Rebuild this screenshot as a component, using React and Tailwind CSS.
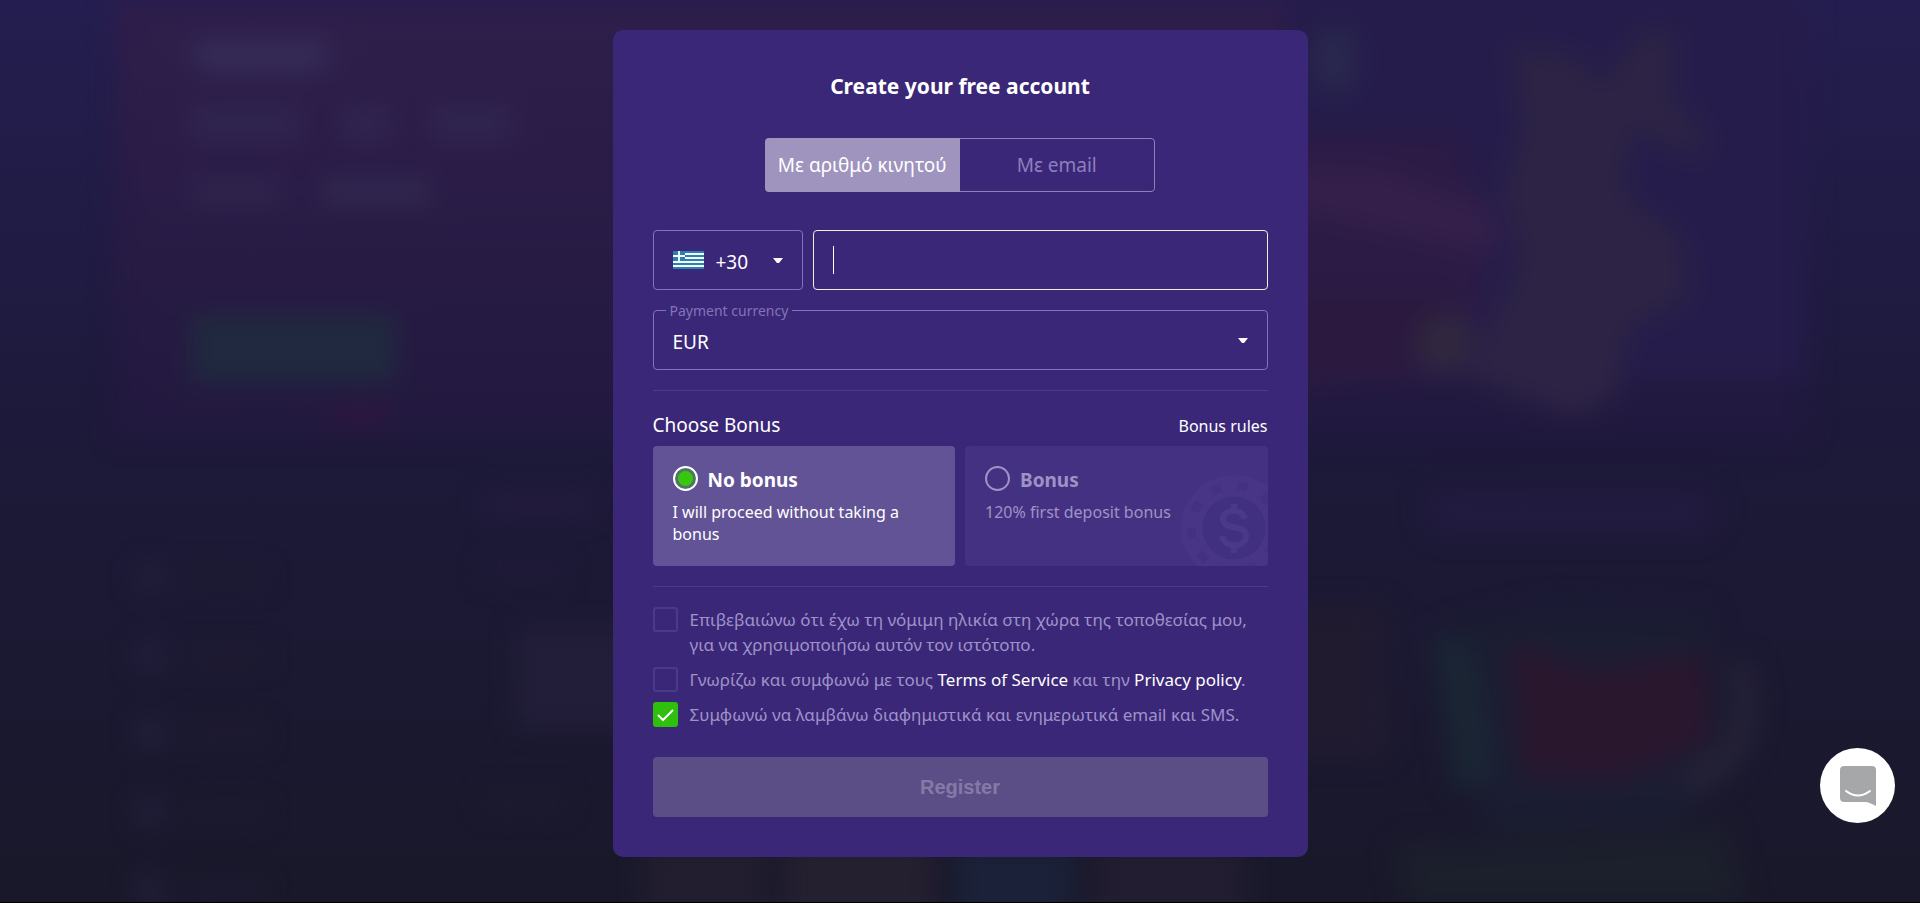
import React, { useState } from "react";

const sideLinks = [1, 2, 3, 4, 5];

// Dimmed, out of focus casino page behind the dialog
function Backdrop() {
  return (
    <div
      aria-hidden="true"
      className="absolute inset-0 overflow-hidden border-b border-black bg-linear-to-b from-[#241e50] via-[#1d1939] to-[#19182a]"
    >
      <div className="blur-[12px]">
        <div className="mx-[6%] flex h-[440px] justify-between bg-linear-to-b from-[#2f1e4b] to-[#22193f]">
          <div className="flex w-[420px] flex-col items-start pl-[76px] pt-[38px]">
            <div className="h-9 w-[140px] rounded-full bg-[#342b56]" />
            <div className="mt-8 flex gap-10">
              <div className="h-9 w-[110px] bg-[#30254f]" />
              <div className="h-9 w-[50px] bg-[#30254f]" />
              <div className="h-9 w-[80px] bg-[#30254f]" />
            </div>
            <div className="mt-9 flex gap-10">
              <div className="h-7 w-[90px] bg-[#2f244d]" />
              <div className="h-7 w-[110px] bg-[#31274f]" />
            </div>
            <div className="mt-[108px] h-[68px] w-[205px] rounded-lg bg-[#20293f]" />
            <div className="mt-5 ml-[140px] h-6 w-14 bg-[#2d163e]" />
          </div>
          <svg viewBox="0 0 520 440" className="h-full w-[520px] blur-[6px]">
            <path d="M0 0h520v440h-520z" fill="#251c4b" />
            <path d="M0 380h520v80h-520z" fill="#21193f" />
            <path d="M0 130h170l40 100-30 150-180 10z" fill="#2b1b45" />
            <path d="M0 165l100 5 110 40v45l-210-45z" fill="#341f4a" />
            <path d="M0 290h170l-30 80-140 10z" fill="#2b193f" />
            <path
              d="M225 45l70 10 20 30 45-60 30 5v70l40 40-20 20-60-30-10 60 60 50 5 60-60 30-10 60-40 30-110-40 20-60 30-60-20-70 20-60z"
              fill="#2c2345"
            />
            <circle cx="160" cy="343" r="30" fill="#30283f" />
            <ellipse cx="50" cy="60" rx="22" ry="34" fill="#29294e" />
          </svg>
        </div>
        <div className="mx-[7%] flex justify-between pt-9">
          <ul className="w-[220px] shrink-0 space-y-[46px] pt-[86px]">
            {sideLinks.map((n) => (
              <li key={n} className="flex items-center gap-5">
                <span className="size-8 rounded-full bg-[#221f3b]" />
                <span className="h-4 w-20 bg-[#1e1b31]" />
              </li>
            ))}
          </ul>
          <div className="flex-1 pt-4 pl-[130px]">
            <div className="h-6 w-[110px] bg-[#241c3e]" />
            <div className="mt-12 h-4 w-[80px] bg-[#1f1b38]" />
            <div className="mt-12 ml-8 h-[100px] w-[150px] bg-[#221e39]" />
            <div className="mt-16 h-5 w-[80px] bg-[#1e1b31]" />
            <div className="mt-8 ml-[160px] flex gap-5">
              <div className="h-20 w-[120px] bg-[#221e2f]" />
              <div className="h-20 w-[150px] bg-[#252030]" />
              <div className="h-20 w-[120px] bg-[#1b2138]" />
              <div className="h-20 w-[150px] bg-[#221d30]" />
            </div>
          </div>
          <svg viewBox="0 0 520 430" className="h-[430px] w-[520px] shrink-0 blur-[4px]">
            <rect x="160" y="12" width="290" height="45" rx="20" fill="#221b40" />
            <rect x="10" y="130" width="110" height="150" fill="#211b30" />
            <path d="M190 150l90-20 160 5 20 100-40 110-200 10z" fill="#1b1d33" />
            <path d="M165 155l40 10 25 140-40 10z" fill="#1a2634" />
            <path d="M245 165l75 30 120-20 5 90-90 40-100-5z" fill="#29172e" />
            <path d="M462 190q30 70-45 110l10 20q85-40 55-135z" fill="#272439" />
            <path d="M130 370l330-20 20 80h-340z" fill="#1c1f2c" />
          </svg>
        </div>
      </div>
    </div>
  );
}

function GreekFlag() {
  return (
    <svg viewBox="0 0 31 18" className="h-[18px] w-[31px] shrink-0" aria-hidden="true">
      <rect width="31" height="18" fill="#2f7fae" />
      <path d="M0 3h31M0 7h31M0 11h31M0 15h31" stroke="#eefcff" strokeWidth="2" />
      <rect width="12" height="10" fill="#2f7fae" />
      <path d="M0 5h12M6 0v10" stroke="#eefcff" strokeWidth="2" />
    </svg>
  );
}

function Caret() {
  return (
    <svg viewBox="0 0 10 5" className="pointer-events-none h-[5px] w-[10px] shrink-0" aria-hidden="true">
      <path d="M0 0h10L6 5H4z" fill="#fff" />
    </svg>
  );
}

function Coin() {
  return (
    <svg
      viewBox="0 0 90 94"
      className="pointer-events-none absolute bottom-0 right-0 h-[94px] w-[90px]"
      aria-hidden="true"
      fill="none"
    >
      <circle cx="56" cy="56" r="50" stroke="#483585" strokeWidth="6" />
      <circle cx="56" cy="56" r="43" stroke="#483585" strokeWidth="9" strokeDasharray="17 10" />
      <circle cx="56" cy="56" r="35" stroke="#483585" strokeWidth="7" />
      <circle cx="56" cy="56" r="31" fill="#412f7f" />
      <path
        d="M67 47c-2-6-6-8-11-8-7 0-11 3-11 8 0 12 23 5 23 17 0 6-5 9-12 9-6 0-11-3-12-9M56 32v7M56 73v8"
        stroke="#4a3888"
        strokeWidth="6"
      />
    </svg>
  );
}

function BonusCard({ value, title, text, selected, onSelect, children }) {
  return (
    <label
      className={
        selected
          ? "relative block h-[120px] flex-1 overflow-hidden rounded bg-[#625396] p-5 text-white"
          : "relative block h-[120px] flex-1 overflow-hidden rounded bg-[#443181] p-5 text-[#9f92c6]"
      }
    >
      {children}
      <span className="flex h-[25px] items-center gap-2.5">
        <input
          type="radio"
          name="bonus"
          value={value}
          checked={selected}
          onChange={() => onSelect(value)}
          className="size-[25px] shrink-0 appearance-none rounded-full border-2 border-[#9f92c6] checked:border-white checked:bg-[#35c80c] checked:shadow-[inset_0_0_0_3px_#56706f]"
        />
        <span className="pt-0.5 text-[19px] leading-6 font-bold">{title}</span>
      </span>
      <span className="mt-2.5 block text-[16px] leading-[22px]">{text}</span>
    </label>
  );
}

function Consent({ defaultChecked, children }) {
  return (
    <label className="flex items-start gap-3 text-[17px] leading-[25px] text-[#9f92c9]">
      <span className="grid shrink-0">
        <input
          type="checkbox"
          defaultChecked={defaultChecked}
          className="peer col-start-1 row-start-1 size-[25px] appearance-none rounded-[3px] border-2 border-[#4b3a8b] checked:border-[#2fc00d] checked:bg-[#2fc00d]"
        />
        <svg
          viewBox="0 0 25 25"
          className="pointer-events-none invisible col-start-1 row-start-1 size-[25px] peer-checked:visible"
          fill="none"
          aria-hidden="true"
        >
          <path d="M5 13l5 5L20 8" stroke="#fff" strokeWidth="2" />
        </svg>
      </span>
      <span>{children}</span>
    </label>
  );
}

export default function App() {
  const [method, setMethod] = useState("phone");
  const [bonus, setBonus] = useState("none");

  const tabOn = "flex-1 bg-[#9f94bd] text-white";
  const tabOff = "flex-1 border border-l-0 border-[#8d80bd] rounded-r text-[#8d80bd]";

  return (
    <div className="relative min-h-screen bg-[#19182a] font-['Noto_Sans',sans-serif] text-white">
      <Backdrop />

      <main className="relative flex justify-center pt-[30px] pb-[46px]">
        <form
          className="w-full max-w-[695px] rounded-[10px] bg-[#3a2778] px-10 pt-10 pb-10"
          onSubmit={(e) => e.preventDefault()}
        >
          <h1 className="text-center text-[21px] leading-8 font-bold">Create your free account</h1>

          <div className="mx-auto mt-9 flex h-[54px] w-[390px] overflow-hidden rounded text-[19px]">
            <button type="button" className={method === "phone" ? tabOn : tabOff} onClick={() => setMethod("phone")}>
              Με αριθμό κινητού
            </button>
            <button type="button" className={method === "email" ? tabOn : tabOff} onClick={() => setMethod("email")}>
              Με email
            </button>
          </div>

          <div className="mt-[38px] flex gap-2.5">
            <div className="flex h-[60px] w-[150px] items-center rounded border border-[#8274b8] px-[19px]">
              <GreekFlag />
              <select aria-label="Country code" className="ml-3 h-full flex-1 appearance-none bg-transparent pt-1 text-[19px] outline-none">
                <option>+30</option>
              </select>
              <Caret />
            </div>
            <div className="flex h-[60px] flex-1 items-center rounded border border-[#f2eee2] px-[19px]">
              <span className="h-7 w-px bg-white" />
              <input
                type="tel"
                aria-label="Phone number"
                className="h-full min-w-0 flex-1 bg-transparent text-[19px] caret-transparent outline-none"
              />
            </div>
          </div>

          <fieldset className="relative mt-5 flex h-[60px] items-center rounded border border-[#8274b8] px-[19px]">
            <label
              htmlFor="currency"
              className="absolute -top-3 left-3 bg-[#3a2778] px-1 text-[14px] leading-6 text-[#8274b8]"
            >
              Payment currency
            </label>
            <select id="currency" className="h-full flex-1 appearance-none bg-transparent pt-1 text-[19px] outline-none">
              <option>EUR</option>
            </select>
            <Caret />
          </fieldset>

          <hr className="mt-5 border-[#4c3b8a]" />

          <div className="mt-[22px] flex h-[25px] items-center justify-between">
            <h2 className="text-[19px]">Choose Bonus</h2>
            <a href="#rules" className="text-[16px]">Bonus rules</a>
          </div>

          <div className="mt-2 flex gap-2.5">
            <BonusCard
              value="none"
              title="No bonus"
              text="I will proceed without taking a bonus"
              selected={bonus === "none"}
              onSelect={setBonus}
            />
            <BonusCard
              value="deposit"
              title="Bonus"
              text="120% first deposit bonus"
              selected={bonus === "deposit"}
              onSelect={setBonus}
            >
              <Coin />
            </BonusCard>
          </div>

          <hr className="mt-5 border-[#4c3b8a]" />

          <div className="mt-5 space-y-2.5">
            <Consent>
              Επιβεβαιώνω ότι έχω τη νόμιμη ηλικία στη χώρα της τοποθεσίας μου, για να χρησιμοποιήσω αυτόν τον
              ιστότοπο.
            </Consent>
            <Consent>
              Γνωρίζω και συμφωνώ με τους <a href="#terms" className="text-white">Terms of Service</a> και την{" "}
              <a href="#privacy" className="text-white">Privacy policy</a>.
            </Consent>
            <Consent defaultChecked>Συμφωνώ να λαμβάνω διαφημιστικά και ενημερωτικά email και SMS.</Consent>
          </div>

          <button
            type="submit"
            disabled
            className="mt-[30px] h-[60px] w-full rounded bg-[#5b4e87] font-['Liberation_Sans',sans-serif] text-[20px] font-bold text-[#857aa6]"
          >
            Register
          </button>
        </form>
      </main>

      <button
        type="button"
        aria-label="Open chat"
        className="fixed right-[25px] bottom-20 flex size-[75px] items-center justify-center rounded-full bg-white"
      >
        <svg viewBox="0 0 36 40" className="h-10 w-9" fill="none" aria-hidden="true">
          <path d="M4 0h28a4 4 0 0 1 4 4v36c-4-2-8-4-11-4H4a4 4 0 0 1-4-4V4a4 4 0 0 1 4-4z" fill="#a6a7a9" />
          <path d="M6 25q12 9 24 0" stroke="#fff" strokeWidth="2" strokeLinecap="round" />
        </svg>
      </button>
    </div>
  );
}
